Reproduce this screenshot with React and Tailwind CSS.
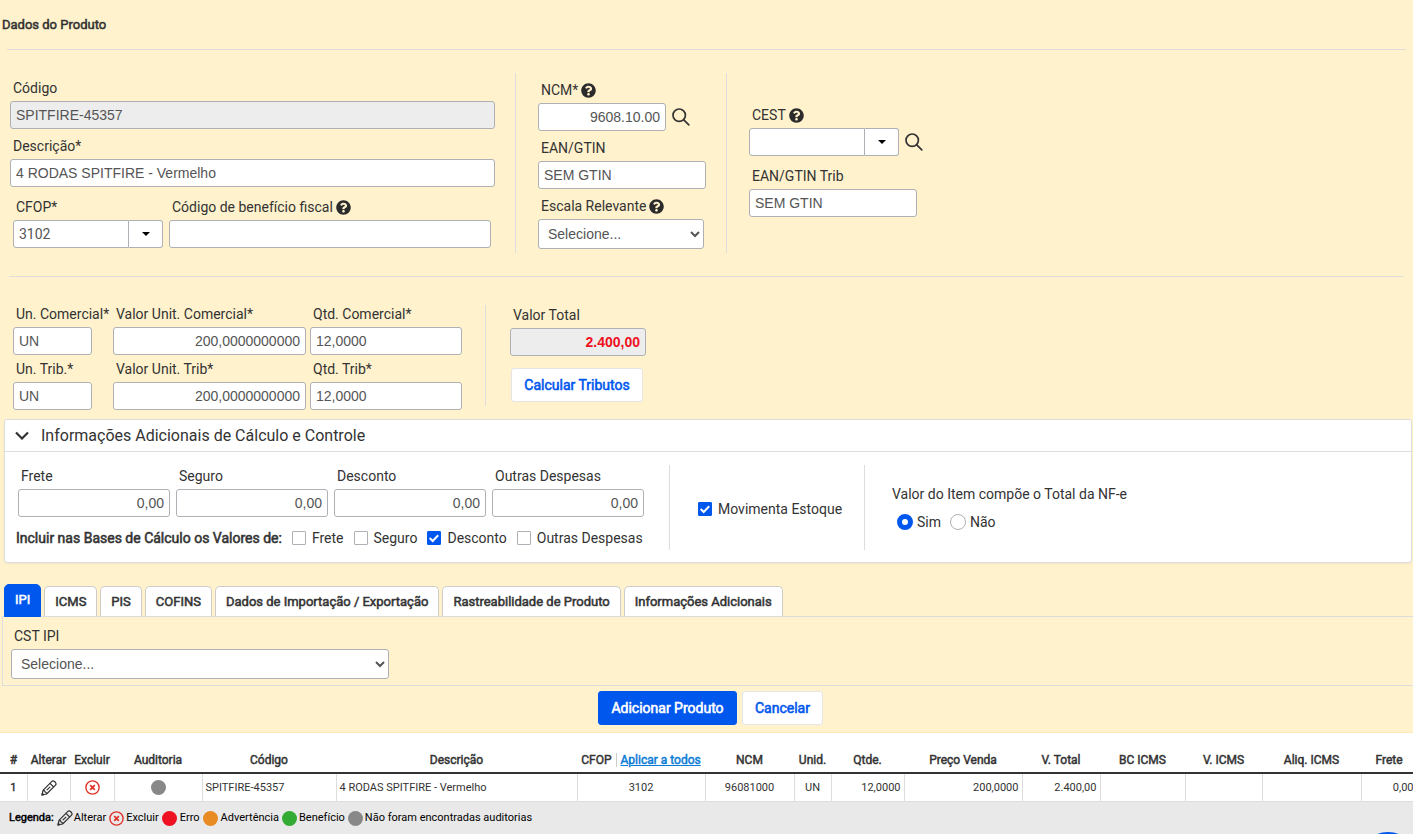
import { useState } from 'react';
import { FaQuestionCircle } from 'react-icons/fa';

const INPUT = "h-7 px-[5px] bg-white border border-[#aeb0b5] rounded-[3px] text-sm text-[#555] font-['Liberation_Sans',Arial,sans-serif] outline-none";
const LABEL = "flex items-center gap-[3px] h-5 mb-[3px] pl-[3px] text-sm leading-5 whitespace-nowrap";
const STRONG = "[-webkit-text-stroke:0.04em_currentColor]";
const BTN = "h-[34px] rounded-[3px] border text-sm cursor-pointer [-webkit-text-stroke:0.04em_currentColor]";

const ABAS = ["IPI", "ICMS", "PIS", "COFINS", "Dados de Importação / Exportação", "Rastreabilidade de Produto", "Informações Adicionais"];

const COLUNAS = [
  { titulo: "#", valor: "1", col: "w-[27px]", cell: "text-center" },
  { titulo: "Alterar", col: "w-[43px]", cell: "text-center" },
  { titulo: "Excluir", col: "w-[44px]", cell: "text-center" },
  { titulo: "Auditoria", col: "w-[88px]", cell: "text-center" },
  { titulo: "Código", valor: "SPITFIRE-45357", col: "w-[134px]", cell: "text-left" },
  { titulo: "Descrição", valor: "4 RODAS SPITFIRE - Vermelho", col: "w-[241px]", cell: "text-left" },
  { titulo: "CFOP", valor: "3102", col: "w-[128px]", cell: "text-center" },
  { titulo: "NCM", valor: "96081000", col: "w-[89px]", cell: "text-center" },
  { titulo: "Unid.", valor: "UN", col: "w-[37px]", cell: "text-center" },
  { titulo: "Qtde.", valor: "12,0000", col: "w-[73px]", cell: "text-right" },
  { titulo: "Preço Venda", valor: "200,0000", col: "w-[118px]", cell: "text-right" },
  { titulo: "V. Total", valor: "2.400,00", col: "w-[78px]", cell: "text-right" },
  { titulo: "BC ICMS", valor: "", col: "w-[85px]", cell: "text-right" },
  { titulo: "V. ICMS", valor: "", col: "w-[77px]", cell: "text-right" },
  { titulo: "Aliq. ICMS", valor: "", col: "w-[99px]", cell: "text-right" },
  { titulo: "Frete", valor: "0,00", col: "w-[56px]", cell: "text-right" },
];

function Ajuda() {
  return <FaQuestionCircle className="size-[15px] text-[#2b2b2b]" />;
}

function Campo({ id, label, ajuda, children, className = "" }) {
  return (
    <div className={`flex flex-col ${className}`}>
      <label htmlFor={id} className={LABEL}>
        {label}
        {ajuda && <Ajuda />}
      </label>
      {children}
    </div>
  );
}

function Texto({ id, label, valor = "", ajuda, className = "", inputClass = "", disabled }) {
  return (
    <Campo id={id} label={label} ajuda={ajuda} className={className}>
      <input id={id} type="text" defaultValue={valor} disabled={disabled} className={`${INPUT} w-full ${inputClass}`} />
    </Campo>
  );
}

function Combo({ id, valor = "" }) {
  return (
    <div className="flex w-[150px] h-7">
      <input
        id={id}
        type="text"
        defaultValue={valor}
        className="w-[116px] px-[5px] bg-white border border-[#aeb0b5] rounded-l-[3px] text-sm text-[#555] outline-none"
      />
      <button
        type="button"
        aria-label="Abrir lista"
        className="flex-1 flex items-center justify-center bg-white border border-l-0 border-[#aeb0b5] rounded-r-[3px]"
      >
        <svg width="8" height="4" viewBox="0 0 8 4"><path d="M0 0h8L4 4z" fill="#000" /></svg>
      </button>
    </div>
  );
}

function Lupa() {
  return (
    <button type="button" aria-label="Pesquisar" className="cursor-pointer">
      <svg width="18" height="18" viewBox="0 0 18 18" fill="none" stroke="#333" strokeWidth="1.7" strokeLinecap="round">
        <circle cx="7.2" cy="7.2" r="6.2" />
        <path d="M11.8 11.8L16.8 16.8" />
      </svg>
    </button>
  );
}

function Check({ label, marcado }) {
  return (
    <label className="flex items-center gap-1.5 text-sm leading-5 whitespace-nowrap">
      <span className="inline-grid place-items-center">
        <input
          type="checkbox"
          defaultChecked={marcado}
          className="peer col-start-1 row-start-1 appearance-none size-3.5 bg-white border border-[#aeb0b5] rounded-[1px] checked:bg-[#0057ee] checked:border-[#0057ee]"
        />
        <svg
          viewBox="0 0 14 14"
          className="col-start-1 row-start-1 size-3.5 invisible peer-checked:visible pointer-events-none"
          fill="none"
          stroke="#fff"
          strokeWidth="2"
        >
          <path d="M2.7 7l3 3 5.5-5.7" />
        </svg>
      </span>
      {label}
    </label>
  );
}

function Radio({ label, marcado }) {
  return (
    <label className="flex items-center gap-1 text-sm leading-5">
      <input
        type="radio"
        name="compoe-total"
        defaultChecked={marcado}
        className="appearance-none size-4 bg-white border border-[#aeb0b5] rounded-full checked:border-[5px] checked:border-[#0057ee]"
      />
      {label}
    </label>
  );
}

function Lapis() {
  return (
    <svg width="16" height="16" viewBox="0 0 16 16" fill="none" stroke="#333" strokeWidth="1.2" strokeLinejoin="round" className="inline-block">
      <path d="M1 15l1-4.600L10.600 1.700a2.200 2.200 0 0 1 2.900-.2l1 1a2.200 2.200 0 0 1-.2 2.900L5.600 14z" />
      <path d="M9 3.300l3.700 3.700M2 10.400l1.700.5.300 1.100 1.100.3.500 1.700M5.800 10.200l3.400-3.400" />
      <path d="M1 15l.4-1.700L2.700 14.600z" fill="#333" />
    </svg>
  );
}

function Excluir() {
  return (
    <svg width="15" height="15" viewBox="0 0 15 15" fill="none" stroke="#e0332b" className="inline-block">
      <circle cx="7.5" cy="7.5" r="6.6" strokeWidth="1.4" />
      <path d="M5.2 5.2l4.6 4.6M9.8 5.2l-4.6 4.6" strokeWidth="1.8" />
    </svg>
  );
}

function Bola({ cor }) {
  return <span className={`inline-block size-[15px] rounded-full ${cor}`} />;
}

export default function App() {
  const [aba, setAba] = useState("IPI");

  return (
    <div className="min-h-screen flex flex-col overflow-hidden bg-white text-[#333] font-[Roboto,sans-serif]">
      <main className="bg-[#fff2cd] border-b border-[#ffe9b8] pb-[7px]">
        <h1 className={`pt-[15px] pl-0.5 text-[13px] leading-5 font-normal ${STRONG}`}>Dados do Produto</h1>
        <hr className="mt-3.5 mx-[7px] border-[#ddd]" />

        {/* Identificação */}
        <section className="flex mt-[23px] h-[180px]">
          <div className="flex flex-col w-[516px] pt-[5px] pl-2.5 pr-5 border-r border-[#ddd]">
            <Texto id="codigo" label="Código" valor="SPITFIRE-45357" disabled inputClass="bg-[#ededed]!" />
            <Texto id="descricao" label="Descrição*" valor="4 RODAS SPITFIRE - Vermelho" className="mt-[7px]" />
            <div className="flex gap-1.5 mt-2.5 px-[3px]">
              <Campo id="cfop" label="CFOP*">
                <Combo id="cfop" valor="3102" />
              </Campo>
              <Texto id="beneficio" label="Código de benefício fiscal" ajuda className="w-[322px]" />
            </div>
          </div>
          <div className="flex flex-col gap-[7px] w-[211px] pt-[7px] pl-[22px] border-r border-[#ddd]">
            <div className="flex">
              <Texto id="ncm" label="NCM*" ajuda valor="9608.10.00" className="w-32" inputClass="text-right" />
              <div className="flex items-center pt-[22px] pl-1.5"><Lupa /></div>
            </div>
            <Texto id="ean" label="EAN/GTIN" valor="SEM GTIN" className="w-[168px]" />
            <Campo id="escala" label="Escala Relevante" ajuda className="w-[166px]">
              <select id="escala" className={`${INPUT} h-[30px]!`}>
                <option>Selecione...</option>
              </select>
            </Campo>
          </div>
          <div className="flex flex-col gap-2.5 pt-8 pl-[22px]">
            <div className="flex">
              <Campo id="cest" label="CEST" ajuda>
                <Combo id="cest" />
              </Campo>
              <div className="flex items-center pt-[22px] pl-1.5"><Lupa /></div>
            </div>
            <Texto id="ean-trib" label="EAN/GTIN Trib" valor="SEM GTIN" className="w-[168px]" />
          </div>
        </section>

        <hr className="mt-[23px] mx-[9px] border-[#ddd]" />

        {/* Quantidades e valores */}
        <section className="flex items-start mt-[27px] pl-[13px]">
          <div className="grid grid-cols-[79px_193px_152px] gap-y-1">
            <Texto id="un-com" label="Un. Comercial*" valor="UN" className="w-[79px]" />
            <Texto id="vu-com" label="Valor Unit. Comercial*" valor="200,0000000000" className="w-[193px] ml-[21px]" inputClass="text-right" />
            <Texto id="qtd-com" label="Qtd. Comercial*" valor="12,0000" className="w-[152px] ml-[25px]" />
            <Texto id="un-trib" label="Un. Trib.*" valor="UN" className="w-[79px]" />
            <Texto id="vu-trib" label="Valor Unit. Trib*" valor="200,0000000000" className="w-[193px] ml-[21px]" inputClass="text-right" />
            <Texto id="qtd-trib" label="Qtd. Trib*" valor="12,0000" className="w-[152px] ml-[25px]" />
          </div>
          <div className="flex flex-col items-start mt-px ml-12 pl-6 h-[101px] border-l border-[#ddd]">
            <Texto id="total" label="Valor Total" valor="2.400,00" disabled className="w-[136px]" inputClass="text-right font-bold text-[#ee1122]! bg-[#ededed]!" />
            <button type="button" className={`${BTN} mt-3 ml-px w-[132px] bg-white border-[#e5e5e5] text-[#0057ee]`}>Calcular Tributos</button>
          </div>
        </section>

        {/* Informações adicionais */}
        <section className="mt-[9px] ml-1 mr-px bg-white border border-[#ddd] rounded-[3px] shadow-xs">
          <h2 className="flex items-center gap-3 h-8 pl-2.5 border-b border-[#ddd] text-base leading-5">
            <svg width="14" height="9" viewBox="0 0 14 9" fill="none" stroke="#333" strokeWidth="2.2"><path d="M1 1.5l6 6 6-6" /></svg>
            Informações Adicionais de Cálculo e Controle
          </h2>
          <div className="flex items-stretch pt-[13px] pb-3">
            <div className="w-[665px] h-[85px] pt-px pl-[13px] border-r border-[#ddd]">
              <div className="flex gap-1.5">
                <Texto id="frete" label="Frete" valor="0,00" className="w-[152px]" inputClass="text-right" />
                <Texto id="seguro" label="Seguro" valor="0,00" className="w-[152px]" inputClass="text-right" />
                <Texto id="desconto" label="Desconto" valor="0,00" className="w-[152px]" inputClass="text-right" />
                <Texto id="outras" label="Outras Despesas" valor="0,00" className="w-[152px]" inputClass="text-right" />
              </div>
              <div className="flex items-center gap-2.5 mt-[11px]">
                <span className={`-ml-0.5 text-sm leading-5 ${STRONG}`}>Incluir nas Bases de Cálculo os Valores de:</span>
                <Check label="Frete" />
                <Check label="Seguro" />
                <Check label="Desconto" marcado />
                <Check label="Outras Despesas" />
              </div>
            </div>
            <div className="flex items-center w-[195px] pt-0.5 pl-7 border-r border-[#ddd]">
              <Check label="Movimenta Estoque" marcado />
            </div>
            <fieldset className="flex flex-col justify-center pl-[27px]">
              <legend className="float-left w-full text-sm leading-5 mb-2">Valor do Item compõe o Total da NF-e</legend>
              <div className="flex gap-[9px] pl-[5px]">
                <Radio label="Sim" marcado />
                <Radio label="Não" />
              </div>
            </fieldset>
          </div>
        </section>

        {/* Abas de tributos */}
        <div role="tablist" className="flex items-end gap-[3px] mt-[21px] pl-1 h-8">
          {ABAS.map((nome) => (
            <button
              key={nome}
              type="button"
              role="tab"
              aria-selected={aba === nome}
              onClick={() => setAba(nome)}
              className={`px-2.5 border rounded-t-[5px] text-[13px] leading-5 whitespace-nowrap ${STRONG} ${
                aba === nome
                  ? 'relative h-[33px] -mb-px pb-0.5 bg-[#0057ee] border-[#0057ee] text-white'
                  : 'h-[30px] bg-white border-[#ccc] border-b-0'
              }`}
            >
              {nome}
            </button>
          ))}
        </div>
        <section className="ml-0.5 pt-[9px] pb-1.5 pl-2 border border-r-0 border-[#ddd]">
          <Campo id="cst" label="CST IPI" className="w-[378px]">
            <select id="cst" className={`${INPUT} h-[30px]!`}>
              <option>Selecione...</option>
            </select>
          </Campo>
        </section>

        <div className="flex justify-center gap-[5px] mt-[5px] pl-2">
          <button type="button" className={`${BTN} w-[139px] bg-[#0057ee] border-[#0057ee] text-white`}>Adicionar Produto</button>
          <button type="button" className={`${BTN} w-[81px] bg-white border-[#e5e5e5] text-[#0057ee]`}>Cancelar</button>
        </div>
      </main>

      {/* Itens da nota */}
      <table className="w-full min-w-[1417px] mt-[15px] table-fixed border-collapse">
        <thead>
          <tr className="h-[25px] border-b-2 border-[#333]">
            {COLUNAS.map((c) => (
              <th key={c.titulo} className={`${c.col} p-0 text-xs font-normal whitespace-nowrap ${STRONG}`}>
                {c.titulo}
                {c.titulo === "CFOP" && (
                  <a href="#aplicar" className="ml-1 pl-1 border-l border-[#ccc] text-[#0a7cd6] underline">Aplicar a todos</a>
                )}
              </th>
            ))}
          </tr>
        </thead>
        <tbody>
          <tr className="h-7">
            {COLUNAS.map((c) => (
              <td key={c.titulo} className={`px-[3px] py-0 border-r border-[#ddd] text-[11px] leading-4 whitespace-nowrap ${c.cell}`}>
                {c.titulo === "#" && <span className={STRONG}>{c.valor}</span>}
                {c.titulo === "Alterar" && <button type="button" aria-label="Alterar" className="block mx-auto"><Lapis /></button>}
                {c.titulo === "Excluir" && <button type="button" aria-label="Excluir" className="block mx-auto"><Excluir /></button>}
                {c.titulo === "Auditoria" && <span className="flex justify-center"><Bola cor="bg-[#888]" /></span>}
                {c.titulo !== "#" && c.valor}
              </td>
            ))}
          </tr>
        </tbody>
      </table>

      <footer className="flex-1 flex items-start gap-[3px] pt-2 pl-[9px] bg-[#e9e9e9] border-t border-[#ddd] text-[11px] leading-4 text-black">
        <span className={STRONG}>Legenda:</span>
        <span className="flex items-center gap-px"><Lapis /> Alterar</span>
        <span className="flex items-center gap-0.5"><Excluir /> Excluir</span>
        <span className="flex items-center gap-[3px]"><Bola cor="bg-[#ee1122]" /> Erro</span>
        <span className="flex items-center gap-[3px]"><Bola cor="bg-[#e88b22]" /> Advertência</span>
        <span className="flex items-center gap-0.5"><Bola cor="bg-[#33aa33]" /> Benefício</span>
        <span className="flex items-center gap-0.5"><Bola cor="bg-[#888]" /> Não foram encontradas auditorias</span>
      </footer>

      <button type="button" aria-label="Ajuda" className="fixed -right-[5px] -bottom-[58px] size-[60px] rounded-full bg-[#0057ee]" />
    </div>
  );
}
